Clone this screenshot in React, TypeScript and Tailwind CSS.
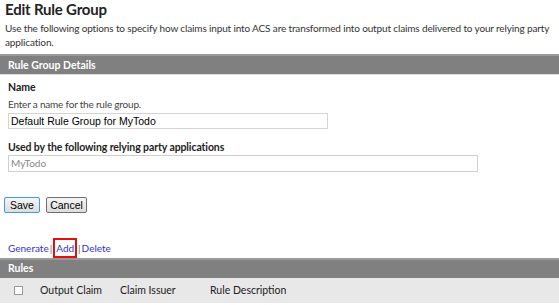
export default function App() {
  const seg = { fontFamily: 'Lato, "Open Sans", sans-serif' };
  const arial = { fontFamily: '"Liberation Sans", Arial, sans-serif' };
  return (
    <div className="w-[559px] h-[305px] overflow-hidden bg-white text-[#222]" style={seg}>
      <div className="px-[5px]">
        <h1 className="text-[15px] font-bold leading-[19px] tracking-[-0.2px] text-[#222]">Edit Rule Group</h1>
        <p className="text-[10px] leading-[14px] mt-[2px] tracking-[-0.14px] text-[#333]">
          Use the following options to specify how claims input into ACS are transformed into output claims delivered to your relying party application.
        </p>
      </div>
      <div className="mt-[5px] h-[21px] bg-[#808080] border-t-[2px] border-[#9a9a9a] border-b border-b-[#dcdcdc] text-white text-[10.5px] font-bold leading-[18px] px-[8px]">
        Rule Group Details
      </div>
      <div className="px-[8px]">
        <div className="mt-[5px] text-[10.5px] font-bold leading-[14px]">Name</div>
        <div className="mt-[3px] text-[10px] leading-[14px] tracking-[-0.2px] text-[#444]">Enter a name for the rule group.</div>
        <div className="mt-[2px] w-[320px] h-[16px] border border-[#d4d4d4] text-[10.5px] leading-[14px] px-[2px] text-black" style={arial}>
          Default Rule Group for MyTodo
        </div>
        <div className="mt-[11px] text-[10.5px] font-bold leading-[14px] tracking-[-0.1px]">Used by the following relying party applications</div>
        <div className="mt-[1px] w-[470px] h-[17px] border border-[#cfcfcf] text-[10px] leading-[15px] px-[2px] text-[#888]">
          MyTodo
        </div>
        <div className="mt-[25px] -ml-[4px] flex gap-[6px]" style={arial}>
          <div className="h-[16px] w-[36px] border border-[#3c9fd8] rounded-[2px] bg-gradient-to-b from-[#f6f6f6] to-[#dcdcdc] text-[10.5px] leading-[14px] text-center text-black">Save</div>
          <div className="h-[16px] w-[41px] border border-[#707070] rounded-[2px] bg-gradient-to-b from-[#f6f6f6] to-[#dcdcdc] text-[10.5px] leading-[14px] text-center text-black">Cancel</div>
        </div>
        <div className="mt-[28px] flex items-center text-[10px] leading-[14px] text-[#3333cc]">
          <span>Generate</span>
          <span className="text-[#666] mx-[1px]">|</span>
          <span className="border-2 border-[#e01010] px-[1px] -my-[3px] py-[1px]">Add</span>
          <span className="text-[#666] mx-[1px]">|</span>
          <span>Delete</span>
        </div>
      </div>
      <div className="mt-[3px] h-[20px] bg-[#808080] border-t-[2px] border-[#9a9a9a] text-white text-[10.5px] font-bold leading-[17px] px-[8px]">
        Rules
      </div>
      <div className="h-[25px] bg-[#e8e8e8] flex items-center text-[10.5px] text-[#222]">
        <div className="ml-[14px] w-[9px] h-[9px] border border-[#999] bg-white" />
        <span className="ml-[17px] w-[80px]">Output Claim</span>
        <span className="w-[90px]">Claim Issuer</span>
        <span>Rule Description</span>
      </div>
    </div>
  );
}
